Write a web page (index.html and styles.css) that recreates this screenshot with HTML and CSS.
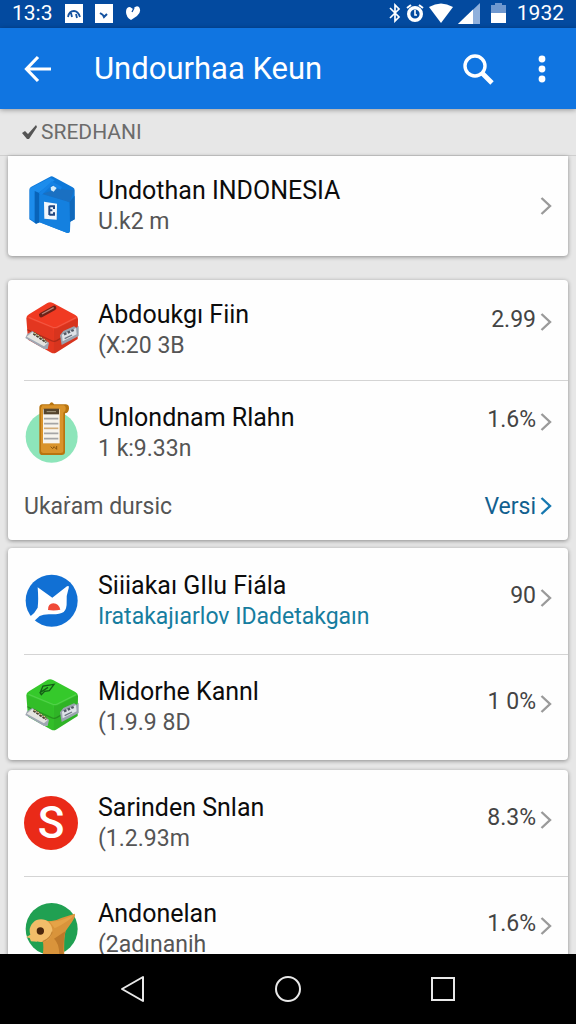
FILE: index.html
```
<!DOCTYPE html>
<html lang="id">
<head>
    <meta charset="UTF-8" />
    <meta name="viewport" content="width=device-width, initial-scale=1" />
    <title>Undourhaa Keun</title>
    <link rel="stylesheet" href="styles.css">
</head>
<body>

    <!-- Shared icons -->
    <svg class="defs" width="0" height="0" aria-hidden="true">
        <symbol id="chevron" viewBox="0 0 12 20">
            <path d="M1.5 2 L10 10 L1.5 18" fill="none" stroke="currentColor" stroke-width="2.4" />
        </symbol>
        <symbol id="box" class="box-shape" viewBox="0 0 162 162">
            <path d="M7 46 Q7 38 15 34 L70 0 Q78 -5 87 0 L154 36 Q162 40 162 49 L161 108 L96 149 Q89 153 82 149 L12 110 Z" fill="currentColor" />
            <path d="M90 76 Q98 78 106 73 L162 44 L161 108 L96 149 Q91 152 89 151 Z" fill="#000" opacity=".1" />
            <path d="M7 44 L84 75 Q90 78 89 86 V151 L82 149 L12 110 Z" fill="#000" opacity=".05" />
            <path d="M9 80 L82 113 Q90 117 98 113 L158 78" fill="none" stroke="#000" stroke-width="4" opacity=".22" />
            <path d="M14 43 L84 72 Q92 76 100 72 L156 44" fill="none" stroke="#fff" stroke-width="4" opacity=".14" />
            <path d="M4 105 L9 94 L25 84 L75 119 L71 138 L60 138 Z" fill="#9fa7b3" />
            <path d="M8 101 L25 87 L71 120 L60 130 Z" fill="#e4e4e0" />
            <path d="M29 91 L68 117" stroke="#4b4030" stroke-width="9" stroke-dasharray="8 3" />
            <path d="M31 90 L69 115" stroke="#dccc8a" stroke-width="4" stroke-dasharray="5 6" />
            <path d="M108 97 L118 84 L150 70 L158 74 L164 68 V99 L113 126 Z" fill="#9aa3af" />
            <path d="M114 95 L156 75 L158 94 L116 115 Z" fill="#dfe3e8" />
            <path d="M120 94 L151 80" stroke="#505864" stroke-width="7" stroke-dasharray="8 4" />
            <path d="M122 107 L144 96" stroke="#6a7380" stroke-width="4" />
        </symbol>
    </svg>

    <div class="statusbar">
        <div class="status-left">
            <span>13:3</span>
            <svg width="18" height="19" viewBox="0 0 18 19"><path d="M0 0h18v19H0z" fill="#fff" /><path d="M3 13 Q4 7 9 7 Q13 7 15 13 M6 9 L7 13 M11 10 L12 14" fill="none" stroke="#1552a0" stroke-width="1.8" /></svg>
            <svg width="18" height="19" viewBox="0 0 18 19"><path d="M0 0h18v19H0z" fill="#fff" /><path d="M5 9l3 2M12 10l-3 3-1-2" fill="none" stroke="#1552a0" stroke-width="2" /></svg>
            <svg width="16" height="16" viewBox="0 0 16 16"><path d="M6 15 Q1 12 1 7 Q1 2 5 2 L8 4 Q11 0 14 2 Q17 7 12 11 Z" fill="#fff" /><path d="M9 3 L7 7" stroke="#084b9f" stroke-width="1.3" /></svg>
        </div>
        <div class="status-right">
            <svg width="12" height="20" viewBox="0 0 12 20"><path d="M1 5l9 9-4 4V2l4 4-9 9" fill="none" stroke="#fff" stroke-width="1.7" /></svg>
            <svg width="18" height="20" viewBox="0 0 18 20"><circle cx="9" cy="11" r="6.300" fill="none" stroke="#fff" stroke-width="3.400" /><path d="M1 5l4-3M17 5l-4-3" stroke="#fff" stroke-width="2" /><path d="M9 7v5h2" fill="none" stroke="#fff" stroke-width="1.6" /></svg>
            <svg width="24" height="20" viewBox="0 0 24 20"><path d="M0 4 Q12 -3 24 4 L12 20z" fill="#fff" /></svg>
            <svg width="22" height="21" viewBox="0 0 22 21"><path d="M22 0v21H0z" fill="#8fb0dc" /><path d="M15 6.500V21H0z" fill="#fff" /></svg>
            <svg class="battery" width="15" height="20" viewBox="0 0 15 20"><path d="M4 0h7v2h4v8H0V2h4z" fill="#6f98cf" /><path d="M0 10h15v10H0z" fill="#fff" /></svg>
            <span>1932</span>
        </div>
    </div>

    <header class="appbar">
        <button class="icon-btn" type="button" aria-label="Kembali">
            <svg width="28" height="28" viewBox="0 0 28 28"><path d="M27 14H3M14 2L2.500 14 14 26" fill="none" stroke="#fff" stroke-width="3.200" /></svg>
        </button>
        <h1>Undourhaa Keun</h1>
        <button class="icon-btn" type="button" aria-label="Cari">
            <svg width="32" height="32" viewBox="0 0 32 32"><circle cx="13" cy="13" r="10" fill="none" stroke="#fff" stroke-width="3.400" /><path d="M20 20l10 10" stroke="#fff" stroke-width="4.800" /></svg>
        </button>
        <button class="icon-btn" type="button" aria-label="Menu">
            <svg width="8" height="28" viewBox="0 0 8 28"><g fill="#fff"><circle cx="4" cy="4" r="3.400" /><circle cx="4" cy="14" r="3.400" /><circle cx="4" cy="24" r="3.400" /></g></svg>
        </button>
    </header>

    <main class="content">
        <h2 class="section-title">
            <svg width="16" height="16" viewBox="0 0 16 16"><path d="M0 9l3-2 3 3L14 1l1 2L7 15H5z" fill="#555" /></svg>
            SREDHANI
        </h2>

        <section class="card card-top">
            <a class="row" href="#">
                <svg class="row-icon" viewBox="0 0 162 162">
                    <path d="M16 32 Q16 26 22 23 L77 -6 Q83 -10 89 -6 L146 25 Q152 28 152 34 L152 121 L139 128 L138 155 Q137 164 128 161 L48 130 L36 134 L16 121 Z" fill="#0e78d8" />
                    <path d="M18 28 L79 -4 L92 4 L46 40 L46 129 L34 130 L18 119 Z" fill="#1c8cec" />
                    <path d="M32 36 L46 42 V130 L36 134 L32 130 Z" fill="#0863b9" />
                    <path d="M46 48 Q48 44 54 46 L128 66 Q136 68 137 76 L138 154 Q137 164 128 161 L46 130 Z" fill="#1480df" />
                    <path d="M54 44 L100 30 L150 34 L137 70 Z" fill="#1a70c2" />
                    <path d="M137 68 L152 50 V121 L138 128 Z" fill="#1169bb" />
                    <path d="M48 46 L84 12 L112 28" fill="none" stroke="#1582e5" stroke-width="9" />
                    <path d="M80 25 L88 20 L98 27 L89 38 L81 34 Z" fill="#d6ecfa" />
                    <path d="M60 68 L99 74 L98 122 L61 119 Z" fill="#f1f7fc" />
                    <path d="M76 80 V108 M76 82 H90 V90 M76 94 H85 M76 107 H90 V100" fill="none" stroke="#20467f" stroke-width="6" />
                </svg>
                <span class="row-text">
                    <span class="row-title">Undothan INDONESIA</span>
                    <span class="row-sub">U.k2 m</span>
                </span>
                <svg class="chevron"><use href="#chevron" /></svg>
            </a>
        </section>

        <section class="card card-rates">
            <a class="row" href="#">
                <svg class="row-icon red" viewBox="0 0 162 162">
                    <use href="#box" width="162" height="162" />
                    <path d="M52 36 L90 15" stroke="#6d2117" stroke-width="14" stroke-linecap="round" />
                    <path d="M54 33 L89 14" stroke="#b88678" stroke-width="4" />
                </svg>
                <span class="row-text">
                    <span class="row-title">Abdoukgı Fiin</span>
                    <span class="row-sub">(X:20 3B</span>
                </span>
                <span class="row-value">2.99</span>
                <svg class="chevron"><use href="#chevron" /></svg>
            </a>
            <a class="row row-tall" href="#">
                <svg class="row-icon" viewBox="0 0 162 162">
                    <circle cx="83" cy="92" r="78" fill="#8de5ba" />
                    <path d="M55 -5 H76 Q83 -18 90 -5 H126 Q136 -4 135 8 Q134 20 123 22 V138 Q123 147 113 147 H56 Q46 147 46 137 V5 Q46 -4 55 -5 Z" fill="#b8740f" />
                    <path d="M55 -2 H119 Q128 1 124 14 L118 20 V135 Q118 141 110 141 H58 Q51 141 51 133 V6 Z" fill="#d9932a" />
                    <path d="M57 10 H107 V112 H57 Z" fill="#f7f4ed" />
                    <path d="M59 8 H105 V25 H59 Z" fill="#54442d" />
                    <path d="M68 17 H96" stroke="#a79c82" stroke-width="3" />
                    <path d="M60 38 H103 M60 53 H103 M60 82 H103 M60 98 H103" stroke="#a5a5a5" stroke-width="5" />
                    <path d="M60 67 H103" stroke="#d3ad78" stroke-width="5" />
                    <path d="M80 122 L86 128 L90 122 L98 130 V120" fill="none" stroke="#8c560e" stroke-width="3" />
                </svg>
                <span class="row-text">
                    <span class="row-title">Unlondnam Rlahn</span>
                    <span class="row-sub">1 k:9.33n</span>
                </span>
                <span class="row-value">1.6%</span>
                <svg class="chevron"><use href="#chevron" /></svg>
            </a>
            <div class="card-footer">
                <span>Ukaṙam dursic</span>
                <a class="more" href="#">Versi <svg class="chevron"><use href="#chevron" /></svg></a>
            </div>
        </section>

        <section class="card">
            <a class="row row-tall" href="#">
                <svg class="row-icon" viewBox="0 0 162 162">
                    <circle cx="83" cy="80" r="78" fill="#1170d4" />
                    <path d="M41 40 L85 71 L125 40 Q130 35 134 36 Q136 40 132 50 Q127 63 128 82 Q129 106 119 114 Q108 121 85 121 Q60 119 47 126 L28 143 L16 130 Q33 117 41 101 Q44 78 41 40 Z" fill="#fff" />
                    <path d="M72 108 Q72 88 88 88 Q105 89 109 107 Q92 111 72 108 Z" fill="#f04a38" />
                </svg>
                <span class="row-text">
                    <span class="row-title">Siiiakaı GIlu Fiála</span>
                    <span class="row-sub link">Iratakajıarlov IDadetakgaın</span>
                </span>
                <span class="row-value">90</span>
                <svg class="chevron"><use href="#chevron" /></svg>
            </a>
            <a class="row row-tall" href="#">
                <svg class="row-icon green" viewBox="0 0 162 162">
                    <use href="#box" width="162" height="162" />
                    <path d="M49 37 L57 18 L90 13 L76 32 L62 34 L52 44 L48 38 L72 22" fill="none" stroke="#145e16" stroke-width="4" />
                </svg>
                <span class="row-text">
                    <span class="row-title">Midorhe Kannl</span>
                    <span class="row-sub">(1.9.9 8D</span>
                </span>
                <span class="row-value">1 0%</span>
                <svg class="chevron"><use href="#chevron" /></svg>
            </a>
        </section>

        <section class="card">
            <a class="row row-tall" href="#">
                <span class="row-icon letter">S</span>
                <span class="row-text">
                    <span class="row-title">Sarinden Snlan</span>
                    <span class="row-sub">(1.2.93m</span>
                </span>
                <span class="row-value">8.3%</span>
                <svg class="chevron"><use href="#chevron" /></svg>
            </a>
            <a class="row row-tall" href="#">
                <svg class="row-icon" viewBox="0 0 162 162">
                    <circle cx="83" cy="81" r="78" fill="#20a052" />
                    <path d="M58 54 Q85 63 112 48 L152 35 Q156 44 144 60 L125 87 Q119 108 121 160 H56 Q60 133 56 116 Z" fill="#d9943b" />
                    <path d="M76 58 Q110 61 152 37 Q137 58 92 79 Z" fill="#e5a347" />
                    <path d="M90 110 Q106 124 106 160 H119 Q117 112 125 87 Z" fill="#bd792a" />
                    <circle cx="51" cy="86" r="34" fill="#f2bd69" />
                    <path d="M23 96 L6 106 L17 108 L21 118 L40 119 Z" fill="#f2bd69" />
                    <path d="M56 119 Q79 111 85 89" fill="none" stroke="#c68534" stroke-width="4" />
                    <circle cx="49" cy="87" r="11" fill="#4a260c" />
                </svg>
                <span class="row-text">
                    <span class="row-title">Andonelan</span>
                    <span class="row-sub">(2adınanih</span>
                </span>
                <span class="row-value">1.6%</span>
                <svg class="chevron"><use href="#chevron" /></svg>
            </a>
        </section>
    </main>

    <nav class="navbar">
        <button class="icon-btn" type="button" aria-label="Back">
            <svg width="28" height="28" viewBox="0 0 28 28"><path d="M24 2v24L3 14z" fill="none" stroke="#e8e8e8" stroke-width="2" stroke-linejoin="round" /></svg>
        </button>
        <button class="icon-btn" type="button" aria-label="Home">
            <svg width="28" height="28" viewBox="0 0 28 28"><circle cx="14" cy="14" r="12" fill="none" stroke="#e8e8e8" stroke-width="2" /></svg>
        </button>
        <button class="icon-btn" type="button" aria-label="Recent">
            <svg width="28" height="28" viewBox="0 0 28 28"><path d="M3 3h22v22H3z" fill="none" stroke="#e8e8e8" stroke-width="2" /></svg>
        </button>
    </nav>

</body>
</html>
```
FILE: styles.css
```
* {
    box-sizing: border-box;
}

body {
    margin: 0;
    height: 100vh;
    display: flex;
    flex-direction: column;
    font-family: Roboto, sans-serif;
    background: #e7e7e7;
    color: #0c0c0c;
}

a {
    color: inherit;
    text-decoration: none;
}

svg {
    flex: none;
}

.defs {
    position: absolute;
}

.box-shape {
    overflow: visible;
}

.statusbar {
    display: flex;
    justify-content: space-between;
    height: 28px;
    padding: 0 12px;
    background: #034a9f;
    color: #fff;
    font-size: 21px;
    line-height: 26px;
}

.status-left,
.status-right {
    display: flex;
    align-items: center;
    height: 26px;
}

.status-left {
    gap: 12px;
}

.status-right {
    gap: 5px;
}

.battery {
    margin: 0 6px;
}

.appbar {
    display: flex;
    align-items: center;
    flex: none;
    height: 81px;
    padding: 0 8px;
    background: #1075e1;
    color: #fff;
    box-shadow: 0 1px 5px rgba(0, 0, 0, 0.35);
    z-index: 1;
}

.appbar h1 {
    flex: 1;
    margin: 0;
    padding-left: 26px;
    font-size: 31px;
    font-weight: 400;
    white-space: nowrap;
}

.icon-btn {
    display: flex;
    align-items: center;
    justify-content: center;
    width: 60px;
    height: 60px;
    padding: 0;
    border: none;
    background: none;
    cursor: pointer;
}

.appbar .icon-btn:last-child {
    margin: 0 -4px 0 4px;
}

.content {
    flex: 1;
    min-height: 0;
    overflow-y: auto;
    scrollbar-width: none;
}

.section-title {
    display: flex;
    align-items: center;
    gap: 3px;
    height: 47px;
    margin: 0;
    padding: 0 22px;
    border-bottom: 1px solid #cfcfcf;
    color: #6c6c6c;
    font-size: 21px;
    font-weight: 400;
}

.card {
    margin: 0 8px 10px;
    border-radius: 4px;
    background: #fefefe;
    box-shadow: 0 1px 4px rgba(0, 0, 0, 0.4);
}

.card-top {
    margin-bottom: 24px;
    border-radius: 0 0 4px 4px;
}

.card-rates {
    margin-bottom: 8px;
}

.row {
    position: relative;
    display: flex;
    align-items: center;
    min-height: 100px;
    padding: 0 16px;
}

.row-tall {
    min-height: 106px;
}

/* divider starts at the icon and runs to the card edge */
.row + .row::before {
    content: "";
    position: absolute;
    top: 0;
    left: 16px;
    right: 0;
    border-top: 1px solid #d4d4d4;
}

.row-icon {
    flex: none;
    width: 54px;
    height: 54px;
    margin-right: 20px;
    overflow: visible;
}

.red {
    color: #f03a22;
}

.green {
    color: #35c92b;
}

.letter {
    border-radius: 50%;
    background: #ea2a18;
    color: #fff;
    font-size: 44px;
    font-weight: 500;
    line-height: 54px;
    text-align: center;
}

.row-text {
    flex: 1;
    display: flex;
    flex-direction: column;
    white-space: nowrap;
}

.row-title {
    font-size: 25px;
    line-height: 32px;
}

.row-sub {
    color: #555;
    font-size: 23px;
    line-height: 30px;
}

.link {
    color: #167d9f;
}

.row-value {
    color: #444;
    font-size: 23px;
    line-height: 28px;
    padding-bottom: 4px;
}

.row-tall .row-value,
.row-tall .chevron {
    margin-bottom: 6px;
}

.chevron {
    width: 12px;
    height: 20px;
    margin-left: 4px;
    color: #9a9a9a;
}

.card-rates .row-value,
.card-rates .row .chevron {
    margin-bottom: 16px;
}

.card-rates .row-tall .row-value,
.card-rates .row-tall .chevron {
    margin-bottom: 22px;
}

.card-footer {
    display: flex;
    align-items: center;
    justify-content: space-between;
    height: 54px;
    padding: 0 16px 14px;
    color: #555;
    font-size: 23px;
}

.more {
    display: flex;
    align-items: center;
    color: #12608f;
}

.more .chevron {
    color: #1678b0;
}

.navbar {
    display: flex;
    align-items: center;
    justify-content: space-evenly;
    flex: none;
    height: 70px;
    padding: 0 8px;
    background: #000;
    z-index: 1;
}
```
